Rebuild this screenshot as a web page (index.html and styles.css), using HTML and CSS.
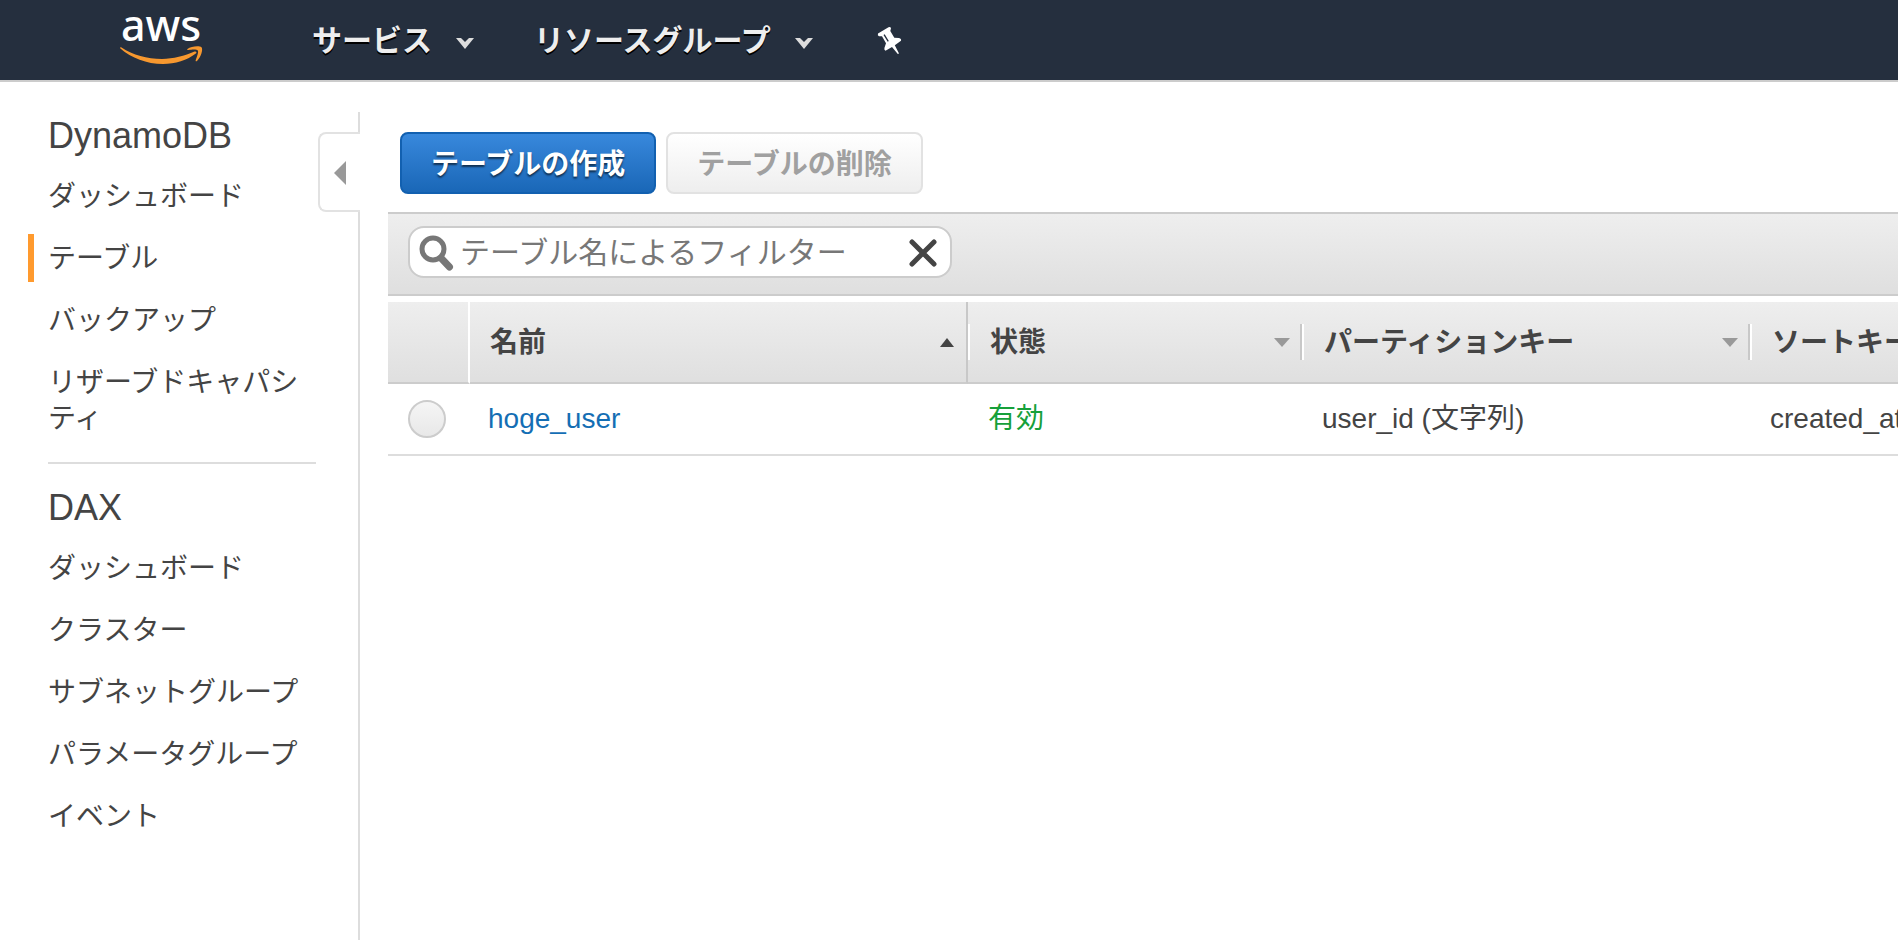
FILE: index.html
```
<!DOCTYPE html>
<html lang="ja">
<head>
<meta charset="utf-8">
<meta name="viewport" content="width=device-width, initial-scale=1">
<title>DynamoDB</title>
<link rel="stylesheet" href="styles.css">
</head>
<body>
<header class="topbar">
  <a class="logo" href="#" aria-label="aws">
    <svg width="84" height="52" viewBox="0 0 84 52">
      <text class="logo-text" x="41" y="28" text-anchor="middle">aws</text>
      <path class="logo-smile" d="M1.500 34.500C13 42 27 46 42 46C53 46 65 43 74.500 38.600C76 37.900 77.300 39.400 75.800 40.600C67.500 47.300 55 51 43 51C26.500 51 11.500 45 .4 35.500C-.4 34.700.5 33.900 1.500 34.500Z"/>
      <path class="logo-smile" d="M67.500 36C71 33.200 79.500 32.600 81.500 34.300C83.300 36.200 81 44.400 77 47.900C76.200 48.600 75.300 48.200 75.700 47.200C76.700 44.500 78.900 38.800 77.800 37.500C76.600 36.100 71.300 36.700 68.500 37C67.300 37.100 66.800 36.500 67.500 36Z"/>
    </svg>
  </a>
  <nav class="topnav">
    <button class="topnav-item" type="button">サービス
      <svg class="chevron" width="18" height="11" viewBox="0 0 18 11"><path d="M0 0H5L9 4L13 0H18L9 11Z"/></svg>
    </button>
    <button class="topnav-item" type="button">リソースグループ
      <svg class="chevron" width="18" height="11" viewBox="0 0 18 11"><path d="M0 0H5L9 4L13 0H18L9 11Z"/></svg>
    </button>
    <button class="topnav-item topnav-pin" type="button" aria-label="ピン留め">
      <svg class="pin" width="26" height="30" viewBox="0 0 26 30"><path fill-rule="evenodd" d="M1 7.500L11.500 1.300Q13.500.6 14 2.300L13.300 5L17.300 11.700L22 12Q24.600 12.600 24 14.800L17.800 19.200L22 27.400L20.800 28L15 21L8.500 24.700Q7 24.200 7.400 22L9 17.300L5 10.300L2 10.300Q.2 9.400 1 7.500ZM6.500 9L10.700 15.700L11.800 15L7.700 8.300Z"/></svg>
    </button>
  </nav>
</header>
<div class="layout">
  <aside class="sidebar">
    <nav class="menu">
      <section class="menu-group">
        <h2 class="menu-title">DynamoDB</h2>
        <ul class="menu-list">
          <li><a class="menu-link" href="#">ダッシュボード</a></li>
          <li><a class="menu-link menu-link-active" href="#" aria-current="page">テーブル</a></li>
          <li><a class="menu-link" href="#">バックアップ</a></li>
          <li><a class="menu-link" href="#">リザーブドキャパシティ</a></li>
        </ul>
      </section>
      <section class="menu-group">
        <h2 class="menu-title">DAX</h2>
        <ul class="menu-list">
          <li><a class="menu-link" href="#">ダッシュボード</a></li>
          <li><a class="menu-link" href="#">クラスター</a></li>
          <li><a class="menu-link" href="#">サブネットグループ</a></li>
          <li><a class="menu-link" href="#">パラメータグループ</a></li>
          <li><a class="menu-link" href="#">イベント</a></li>
        </ul>
      </section>
    </nav>
    <div class="rail">
      <button class="collapse" type="button" aria-label="メニューを閉じる">
        <svg width="12" height="24" viewBox="0 0 12 24"><path fill="#999" d="M12 0V24L0 12Z"/></svg>
      </button>
    </div>
  </aside>
  <main class="content">
    <div class="actions">
      <button class="btn btn-primary" type="button">テーブルの作成</button>
      <button class="btn" type="button" disabled>テーブルの削除</button>
    </div>
    <div class="toolbar">
      <div class="search">
        <svg class="search-icon" width="34" height="36" viewBox="0 0 34 36"><circle cx="14" cy="14" r="11" fill="none" stroke="#777" stroke-width="5"/><path d="M22 23L30.500 32" stroke="#777" stroke-width="7" stroke-linecap="round"/></svg>
        <input class="search-input" type="text" placeholder="テーブル名によるフィルター" aria-label="テーブル名によるフィルター">
        <button class="clear" type="button" aria-label="クリア">
          <svg width="28" height="28" viewBox="0 0 28 28"><path d="M3 3L25 25M25 3L3 25" stroke="#444" stroke-width="5" stroke-linecap="round"/></svg>
        </button>
      </div>
    </div>
    <table class="grid">
      <colgroup><col class="col-select"><col class="col-name"><col class="col-status"><col class="col-partition"><col></colgroup>
      <thead>
        <tr>
          <th class="head-select"></th>
          <th class="head-name" aria-sort="ascending"><button class="sort" type="button">名前 <svg width="14" height="9" viewBox="0 0 14 9"><path fill="#444" d="M0 9L7 0L14 9Z"/></svg></button></th>
          <th class="head-short"><button class="sort" type="button">状態 <svg width="16" height="9" viewBox="0 0 16 9"><path fill="#999" d="M0 0H16L8 9Z"/></svg></button></th>
          <th class="head-short"><button class="sort" type="button">パーティションキー <svg width="16" height="9" viewBox="0 0 16 9"><path fill="#999" d="M0 0H16L8 9Z"/></svg></button></th>
          <th class="head-short"><button class="sort" type="button">ソートキー</button></th>
        </tr>
      </thead>
      <tbody>
        <tr>
          <td class="cell-select"><input class="radio" type="radio" name="table" aria-label="hoge_user"></td>
          <td><a class="link" href="#">hoge_user</a></td>
          <td class="active">有効</td>
          <td>user_id (文字列)</td>
          <td>created_at</td>
        </tr>
      </tbody>
    </table>
  </main>
</div>
</body>
</html>
```

FILE: styles.css
```
*, *::before, *::after { box-sizing: border-box; }

body {
  margin: 0;
  min-height: 100vh;
  display: flex;
  flex-direction: column;
  background: #fff;
  color: #444;
  font-family: "Liberation Sans", "Noto Sans CJK JP", sans-serif;
  font-size: 28px;
  line-height: 36px;
}

button, input { font: inherit; color: inherit; margin: 0; }
button { padding: 0; border: 0; background: none; cursor: pointer; }
svg { display: block; flex: none; overflow: visible; }

.topbar {
  display: flex;
  align-items: center;
  height: 82px;
  padding-left: 120px;
  background: #252f3e;
  border-bottom: 2px solid #ccc;
}
.logo { margin: 0 108px 2px 0; }
.logo-text {
  fill: #fff;
  font-family: "Noto Sans", "Open Sans", sans-serif;
  font-size: 43px;
  font-weight: 500;
}
.logo-smile { fill: #f7982f; }
.topnav { display: flex; align-items: center; gap: 60px; padding-top: 2px; }
.topnav-item {
  display: flex;
  align-items: center;
  gap: 24px;
  color: #eee;
  font-size: 30px;
  font-weight: 700;
  white-space: nowrap;
  text-shadow: 0 2px 0 #000;
}
.topnav-pin { padding-left: 4px; }
.chevron { fill: #ddd; margin-top: 4px; }
.pin { fill: #fff; }

.layout { flex: 1; display: flex; }

.sidebar {
  flex: none;
  display: flex;
  width: 360px;
  padding-top: 30px;
}
.menu { flex: 1; padding-left: 28px; }
.menu-group + .menu-group {
  margin: 20px 2px 0 20px;
  padding-top: 20px;
  border-top: 2px solid #ddd;
}
.menu-group + .menu-group .menu-title,
.menu-group + .menu-group .menu-list { margin-left: -20px; }
.menu-title {
  margin: 0;
  padding: 0 0 12px 20px;
  font-size: 36px;
  font-weight: 400;
  line-height: 48px;
}
.menu-list {
  display: flex;
  flex-direction: column;
  gap: 14px;
  margin: 0;
  padding: 0;
  list-style: none;
}
.menu-link {
  display: block;
  padding: 7px 0 5px 14px;
  border-left: 6px solid transparent;
  color: #444;
  text-decoration: none;
  word-break: break-all;
}
.menu-link-active { border-color: #ff9a2e; }

.rail {
  display: flex;
  flex-direction: column;
  width: 42px;
}
.rail::before, .rail::after {
  content: "";
  height: 20px;
  border-right: 2px solid #ddd;
}
.rail::after { flex: 1; }
.collapse {
  display: flex;
  align-items: center;
  height: 80px;
  padding: 2px 0 0 14px;
  border: 2px solid #e2e2e2;
  border-right: 0;
  border-radius: 8px 0 0 8px;
}

.content { flex: 1; min-width: 0; padding: 50px 0 0 28px; }

.actions { display: flex; gap: 10px; padding: 0 12px 18px; }
.btn {
  padding: 13px 29px 9px;
  border: 2px solid #e2e2e2;
  border-radius: 8px;
  background: linear-gradient(#fff, #eee);
  color: #a0a0a0;
  font-weight: 700;
}
.btn-primary {
  border-color: #1260b0;
  background: linear-gradient(#3888dc, #1a67b7);
  color: #fff;
  text-shadow: 0 2px 2px rgba(0, 0, 0, .6);
}

.toolbar {
  padding: 12px 20px 16px;
  border: solid #ccc;
  border-width: 2px 0;
  background: linear-gradient(#eee, #dfdfdf);
}
.search {
  display: flex;
  align-items: center;
  width: 544px;
  max-width: 100%;
  height: 52px;
  padding: 2px 13px 0 9px;
  border: 2px solid #ccc;
  border-radius: 16px;
  background: #fff;
}
.search-input {
  flex: 1;
  min-width: 0;
  height: 46px;
  padding: 0 0 0 7px;
  border: 0;
  background: none;
  outline: 0;
  font-size: 30px;
}
.search-input::placeholder { color: #777; opacity: 1; }

.grid {
  width: 100%;
  margin-top: 6px;
  table-layout: fixed;
  border-spacing: 0;
}
.col-select { width: 82px; }
.col-name { width: 498px; }
.col-status { width: 334px; }
.col-partition { width: 448px; }

.grid thead { background: linear-gradient(#eee, #dfdfdf); }
.grid th {
  height: 82px;
  padding: 0;
  border-bottom: 2px solid #ccc;
  overflow: hidden;
}
.grid .head-select { border-right: 2px solid #fff; }
.grid .head-name { border-right: 2px solid #c8c8c8; }
.head-short {
  background:
    linear-gradient(#fff, #fff) left center / 2px 36px no-repeat,
    linear-gradient(#c8c8c8, #c8c8c8) right center / 2px 36px no-repeat;
}
.head-short:last-child {
  background: linear-gradient(#fff, #fff) left center / 2px 36px no-repeat;
}
.sort {
  display: flex;
  align-items: center;
  justify-content: space-between;
  width: 100%;
  padding: 2px 12px 0 20px;
  font-weight: 700;
  white-space: nowrap;
}
.sort svg { margin-bottom: 2px; }
.head-short .sort { padding-left: 22px; }

.grid td {
  height: 72px;
  padding: 0 0 0 18px;
  border-bottom: 2px solid #ddd;
  white-space: nowrap;
  overflow: hidden;
}
.grid .cell-select { padding-left: 20px; }
.radio {
  appearance: none;
  display: block;
  width: 38px;
  height: 38px;
  border: 2px solid #ccc;
  border-radius: 50%;
  background: linear-gradient(#f5f5f5, #e8e8e8);
}
.link { color: #146eb4; text-decoration: none; }
.grid .active { padding-left: 20px; color: #16a03a; }
.grid .active ~ td { padding-left: 20px; }
```
